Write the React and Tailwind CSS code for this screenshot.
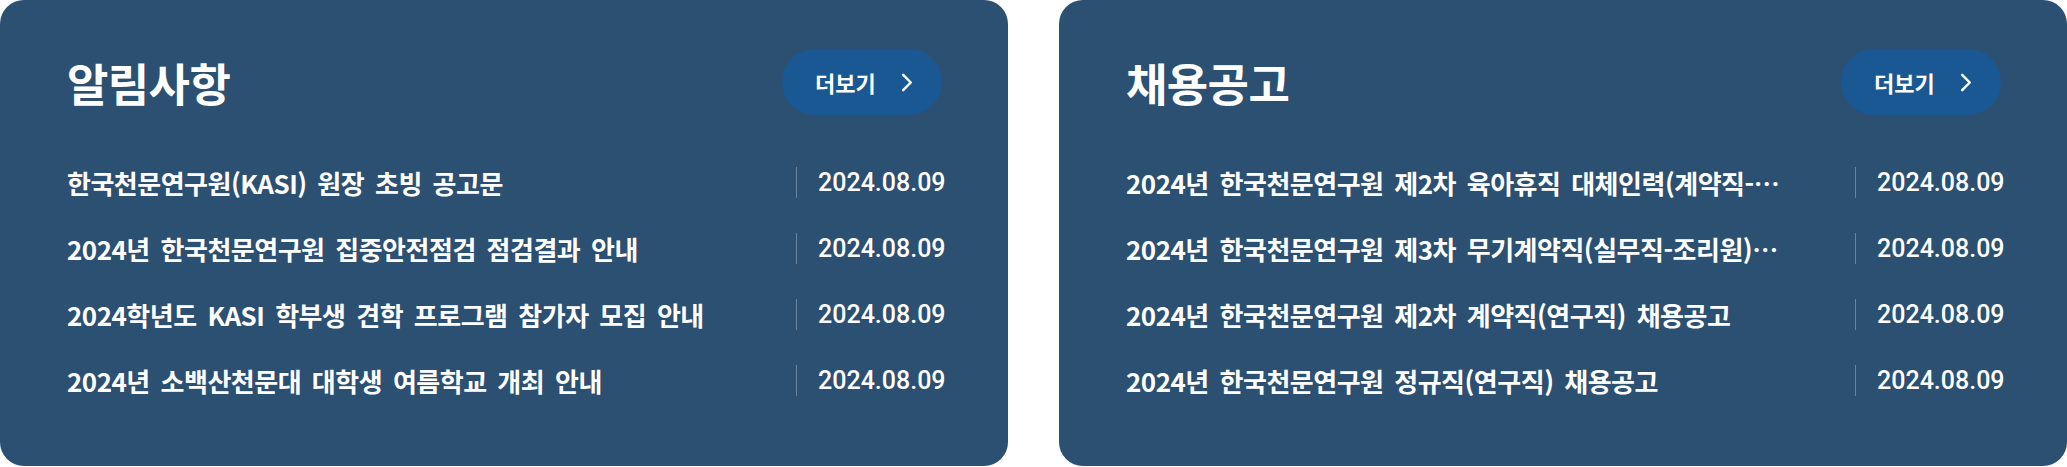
import React from "react";

const notices = [
  { title: "한국천문연구원(KASI) 원장 초빙 공고문", date: "2024.08.09" },
  { title: "2024년 한국천문연구원 집중안전점검 점검결과 안내", date: "2024.08.09" },
  { title: "2024학년도 KASI 학부생 견학 프로그램 참가자 모집 안내", date: "2024.08.09" },
  { title: "2024년 소백산천문대 대학생 여름학교 개최 안내", date: "2024.08.09" },
];

const jobs = [
  { title: "2024년 한국천문연구원 제2차 육아휴직 대체인력(계약직-연구직) 채용공고", date: "2024.08.09" },
  { title: "2024년 한국천문연구원 제3차 무기계약직(실무직-조리원) 채용공고", date: "2024.08.09" },
  { title: "2024년 한국천문연구원 제2차 계약직(연구직) 채용공고", date: "2024.08.09" },
  { title: "2024년 한국천문연구원 정규직(연구직) 채용공고", date: "2024.08.09" },
];

function ChevronRight() {
  return (
    <svg viewBox="0 0 12 20" className="w-[12px] h-[19px]" fill="none">
      <path
        d="M2 2l8 8-8 8"
        stroke="white"
        strokeWidth="2.6"
        strokeLinecap="round"
        strokeLinejoin="round"
      />
    </svg>
  );
}

function Board({ title, items }) {
  return (
    <section className="w-[1008px] h-[466px] shrink-0 rounded-[24px] bg-[#2c5072] pt-[49px] pl-[67px] pr-[66px] text-white">
      <div className="flex items-center justify-between h-[66px]">
        <h2 className="text-[45px] leading-none font-bold tracking-[-0.6px]">{title}</h2>
        <button className="w-[160px] h-[66px] rounded-full bg-[#1a5894] flex items-center pl-[33px] gap-[25px]">
          <span className="text-[22px] font-bold leading-none">더보기</span>
          <ChevronRight />
        </button>
      </div>
      <ul className="mt-[34px]">
        {items.map((item, i) => (
          <li key={i} className="flex items-center h-[66px]">
            <p className="flex-1 min-w-0 truncate mr-[70px] text-[26px] font-bold tracking-[-0.5px] [word-spacing:4px] leading-[1.5]">
              {item.title}
            </p>
            <span className="w-px h-[31px] bg-white/30 shrink-0" />
            <span className="w-[145px] shrink-0 pl-[21px] font-['Roboto'] text-[25px] font-medium leading-none">
              {item.date}
            </span>
          </li>
        ))}
      </ul>
    </section>
  );
}

export default function App() {
  return (
    <div
      lang="ko"
      className="w-[2067px] h-[467px] bg-white flex gap-[51px]"
      style={{ fontFamily: '"Noto Sans CJK KR", "Noto Sans", sans-serif' }}
    >
      <Board title="알림사항" items={notices} />
      <Board title="채용공고" items={jobs} />
    </div>
  );
}
